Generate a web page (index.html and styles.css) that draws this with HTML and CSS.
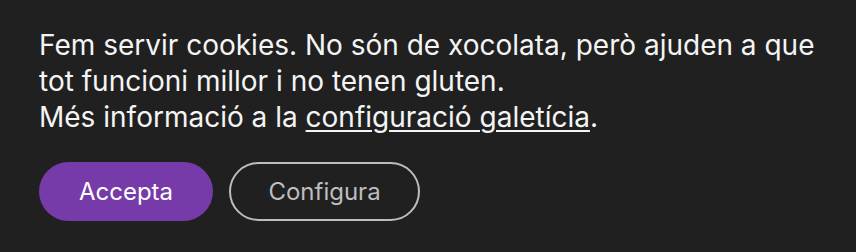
FILE: index.html
```html
<!DOCTYPE html>
<html lang="ca">
<head>
<meta charset="utf-8">
<link rel="stylesheet" href="styles.css">
</head>
<body>
<div class="banner">
  <p class="msg">Fem servir cookies. No són de xocolata, però ajuden a que tot funcioni millor i no tenen gluten.<br>Més informació a la <a href="#">configuració galetícia</a>.</p>
  <div class="actions">
    <button class="btn primary">Accepta</button>
    <button class="btn outline">Configura</button>
  </div>
</div>
</body>
</html>
```
FILE: styles.css
```css
html, body { margin: 0; padding: 0; }
body {
  background: #202020;
  font-family: Inter, "Noto Sans", sans-serif;
  width: 856px;
  height: 252px;
  overflow: hidden;
}
.banner {
  padding: 27px 39px 0 39px;
}
.msg {
  margin: 0;
  color: #f4f4f4;
  font-size: 28px;
  line-height: 36px;
  width: 790px;
}
.msg a { color: #f4f4f4; text-decoration: underline; text-underline-offset: 3px; text-decoration-thickness: 2px; }
.actions {
  display: flex;
  gap: 16px;
  margin-top: 27px;
}
.btn {
  height: 59px;
  border-radius: 30px;
  font-family: Inter, "Noto Sans", sans-serif;
  font-size: 24px;
  cursor: pointer;
  padding: 0;
}
.primary {
  width: 174px;
  background: #763ba8;
  color: #fff;
  border: none;
}
.outline {
  width: 191px;
  background: transparent;
  color: #bdbdbd;
  border: 2px solid #bdbdbd;
}
```
